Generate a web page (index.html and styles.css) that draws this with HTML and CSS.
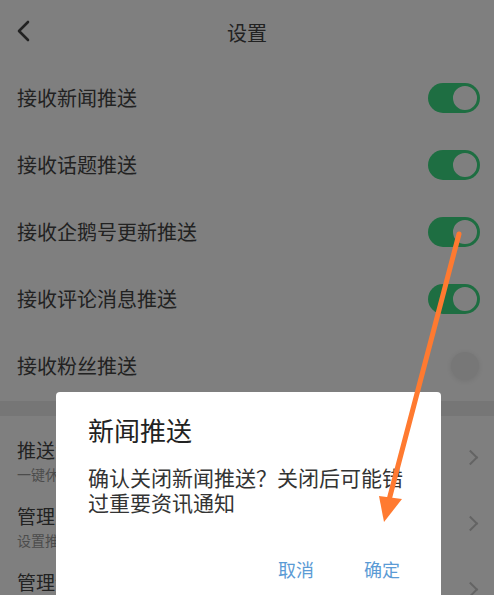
FILE: index.html
```html
<!DOCTYPE html>
<html lang="zh-CN">
<head>
    <meta charset="UTF-8">
    <meta name="viewport" content="width=device-width, initial-scale=1.0">
    <title>设置</title>
    <link rel="stylesheet" href="styles.css">
</head>
<body>
    <div class="page">
        <header class="topbar">
            <svg class="back" width="14" height="22" viewBox="0 0 14 22">
                <polyline points="11,2 2,11 11,20" fill="none" stroke="#444" stroke-width="2.6" stroke-linecap="round" stroke-linejoin="round"/>
            </svg>
            <h1 class="title">设置</h1>
        </header>

        <ul class="switch-list">
            <li class="switch-row">
                <span>接收新闻推送</span>
                <span class="toggle on"><i></i></span>
            </li>
            <li class="switch-row">
                <span>接收话题推送</span>
                <span class="toggle on"><i></i></span>
            </li>
            <li class="switch-row">
                <span>接收企鹅号更新推送</span>
                <span class="toggle on"><i></i></span>
            </li>
            <li class="switch-row">
                <span>接收评论消息推送</span>
                <span class="toggle on"><i></i></span>
            </li>
            <li class="switch-row">
                <span>接收粉丝推送</span>
                <span class="toggle off"><i></i></span>
            </li>
        </ul>

        <div class="section-gap"></div>

        <ul class="link-list">
            <li class="link-row">
                <div class="link-text">
                    <div class="link-title">推送免打扰</div>
                    <div class="link-sub">一键休眠所有推送</div>
                </div>
                <span class="chevron"></span>
            </li>
            <li class="link-row">
                <div class="link-text">
                    <div class="link-title">管理关注推送</div>
                    <div class="link-sub">设置推送的关注对象</div>
                </div>
                <span class="chevron"></span>
            </li>
            <li class="link-row">
                <div class="link-text">
                    <div class="link-title">管理订阅推送</div>
                    <div class="link-sub">选择想要接收的频道</div>
                </div>
                <span class="chevron"></span>
            </li>
        </ul>
    </div>

    <div class="mask"></div>

    <div class="dialog">
        <h2 class="dialog-title">新闻推送</h2>
        <p class="dialog-body">确认关闭新闻推送？关闭后可能错过重要资讯通知</p>
        <div class="dialog-actions">
            <button type="button">取消</button>
            <button type="button">确定</button>
        </div>
    </div>

    <!-- hint arrow pointing from the switch down to the confirm button -->
    <svg class="hint-arrow" width="494" height="595" viewBox="0 0 494 595">
        <line x1="459" y1="234" x2="389" y2="500" stroke="#ff7a30" stroke-width="5" stroke-linecap="round"/>
        <polygon points="379,496 402,499 384,522" fill="#ff7a30"/>
    </svg>
</body>
</html>
```

FILE: styles.css
```css
body {
    margin: 0;
    padding: 0;
    width: 494px;
    height: 595px;
    overflow: hidden;
    background-color: #ffffff;
    font-family: "Noto Sans CJK SC", "Noto Sans", sans-serif;
    color: #444;
}

ul {
    list-style: none;
    margin: 0;
    padding: 0;
}

.topbar {
    height: 64px;
    display: flex;
    align-items: center;
    justify-content: center;
    position: relative;
}

.back {
    position: absolute;
    left: 17px;
    top: 20px;
}

.title {
    margin: 0;
    font-size: 20px;
    font-weight: normal;
    color: #444;
}

.switch-row {
    height: 67px;
    display: flex;
    align-items: center;
    justify-content: space-between;
    padding: 0 14px 0 17px;
    font-size: 20px;
}

.toggle {
    width: 52px;
    height: 30px;
    border-radius: 15px;
    display: flex;
    align-items: center;
    justify-content: flex-end;
    padding: 0 1px;
    box-sizing: border-box;
}

.toggle i {
    width: 28px;
    height: 28px;
    border-radius: 50%;
    background-color: #ffffff;
    box-sizing: border-box;
}

.toggle.on {
    background-color: #3ddc84;
}

.toggle.on i {
    border: 2px solid #3ddc84;
}

.toggle.off {
    background-color: transparent;
}

.toggle.off i {
    background-color: #eeeeee;
    box-shadow: 0 1px 6px rgba(0, 0, 0, 0.1);
}

.section-gap {
    height: 15px;
    margin-top: 2px;
    background-color: #ececec;
}

.link-row {
    height: 66px;
    display: flex;
    justify-content: space-between;
    padding: 22px 14px 0 17px;
    box-sizing: border-box;
}

.link-title {
    font-size: 19px;
    line-height: 24px;
    color: #444;
}

.link-sub {
    margin-top: 2px;
    font-size: 14px;
    line-height: 20px;
    color: #999;
}

.chevron {
    width: 9px;
    height: 9px;
    margin: 14px 4px 0 0;
    border-top: 2px solid #c8c8c8;
    border-right: 2px solid #c8c8c8;
    transform: rotate(45deg);
}

.mask {
    position: fixed;
    inset: 0;
    background-color: rgba(0, 0, 0, 0.5);
}

.dialog {
    position: absolute;
    left: 56px;
    top: 392px;
    width: 385px;
    height: 230px;
    box-sizing: border-box;
    padding: 22px 27px 0 32px;
    background-color: #ffffff;
    border-radius: 4px;
}

.dialog-title {
    margin: 0;
    font-size: 26px;
    line-height: 32px;
    font-weight: normal;
    color: #222;
}

.dialog-body {
    margin: 19px 0 0;
    font-size: 21px;
    line-height: 25px;
    color: #333;
}

.dialog-actions {
    display: flex;
    justify-content: flex-end;
    gap: 22px;
    margin-top: 36px;
}

.dialog-actions button {
    background: none;
    border: none;
    padding: 6px 14px;
    font-family: inherit;
    font-size: 18px;
    line-height: 24px;
    color: #5b9bd5;
    cursor: pointer;
}

.hint-arrow {
    position: absolute;
    left: 0;
    top: 0;
}
```
